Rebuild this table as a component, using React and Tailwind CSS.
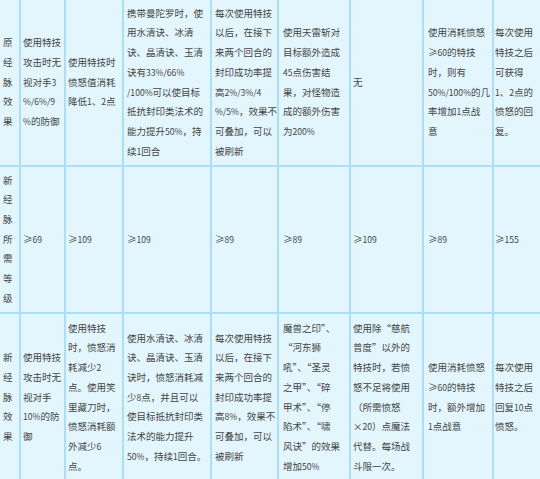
import React from "react";

const rows = [
  [
    ["原", "经", "脉", "效", "果"],
    ["使用特技", "攻击时无", "视对手3", "%/6%/9", "%的防御"],
    ["使用特技时", "愤怒值消耗", "降低1、2点"],
    [
      "携带曼陀罗时，使",
      "用水清诀、冰清",
      "诀、晶清诀、玉清",
      "诀有33%/66%",
      "/100%可以使目标",
      "抵抗封印类法术的",
      "能力提升50%，持",
      "续1回合",
    ],
    [
      "每次使用特技",
      "以后，在接下",
      "来两个回合的",
      "封印成功率提",
      "高2%/3%/4",
      "%/5%，效果不",
      "可叠加，可以",
      "被刷新",
    ],
    [
      "使用天雷斩对",
      "目标额外造成",
      "45点伤害结",
      "果，对怪物造",
      "成的额外伤害",
      "为200%",
    ],
    ["无"],
    [
      "使用消耗愤怒",
      "≥60的特技",
      "时，则有",
      "50%/100%的几",
      "率增加1点战",
      "意",
    ],
    ["每次使用", "特技之后", "可获得", "1、2点的", "愤怒的回", "复。"],
  ],
  [
    ["新", "经", "脉", "所", "需", "等", "级"],
    ["≥69"],
    ["≥109"],
    ["≥109"],
    ["≥89"],
    ["≥89"],
    ["≥109"],
    ["≥89"],
    ["≥155"],
  ],
  [
    ["新", "经", "脉", "效", "果"],
    ["使用特技", "攻击时无", "视对手", "10%的防", "御"],
    [
      "使用特技",
      "时，愤怒消",
      "耗减少2",
      "点。使用笑",
      "里藏刀时，",
      "愤怒消耗额",
      "外减少6",
      "点。",
    ],
    [
      "使用水清诀、冰清",
      "诀、晶清诀、玉清",
      "诀时，愤怒消耗减",
      "少8点，并且可以",
      "使目标抵抗封印类",
      "法术的能力提升",
      "50%，持续1回合。",
    ],
    [
      "每次使用特技",
      "以后，在接下",
      "来两个回合的",
      "封印成功率提",
      "高8%，效果不",
      "可叠加，可以",
      "被刷新",
    ],
    [
      "魔兽之印”、",
      "“河东狮",
      "吼”、“圣灵",
      "之甲”、“碎",
      "甲术”、“停",
      "陷术”、“啸",
      "风诀”的效果",
      "增加50%",
    ],
    [
      "使用除“慈航",
      "普度”以外的",
      "特技时，若愤",
      "怒不足将使用",
      "（所需愤怒",
      "×20）点魔法",
      "代替。每场战",
      "斗限一次。",
    ],
    ["使用消耗愤怒", "≥60的特技", "时，额外增加", "1点战意"],
    ["每次使用", "特技之后", "回复10点", "愤怒。"],
  ],
];

const pads = [
  "pl-[3px]",
  "pl-[2px]",
  "pl-[2px]",
  "pl-[3px]",
  "pl-[3px]",
  "pl-[4px]",
  "pl-[2px]",
  "pl-[4px]",
  "pl-[1px]",
];

function Line({ text }) {
  const parts = text.split(/([0-9%/.]+)/);
  return (
    <div className="whitespace-nowrap">
      {parts.map((p, i) =>
        i % 2 === 1 ? (
          <span key={i} className="text-[8.6px]">
            {p}
          </span>
        ) : (
          <span key={i}>{p}</span>
        )
      )}
    </div>
  );
}

export default function App() {
  return (
    <div className="w-[540px] h-[479px] overflow-hidden bg-white">
      <div
        className="grid w-[540px] gap-[2px] bg-[#aadff5] grid-cols-[19px_43px_56px_86px_65px_70px_71px_68px_1fr] grid-rows-[165px_145px_167px] text-[#444] text-[9.5px] leading-[19.7px]"
        style={{ fontFamily: '"Noto Sans CJK SC", "Noto Sans", sans-serif' }}
      >
        {rows.map((row, ri) =>
          row.map((lines, ci) => (
            <div
              key={ri + "-" + ci}
              className={"flex flex-col justify-center overflow-hidden bg-[#e3f6fd] " + pads[ci]}
            >
              {lines.map((l, li) => (
                <Line key={li} text={l} />
              ))}
            </div>
          ))
        )}
      </div>
    </div>
  );
}
